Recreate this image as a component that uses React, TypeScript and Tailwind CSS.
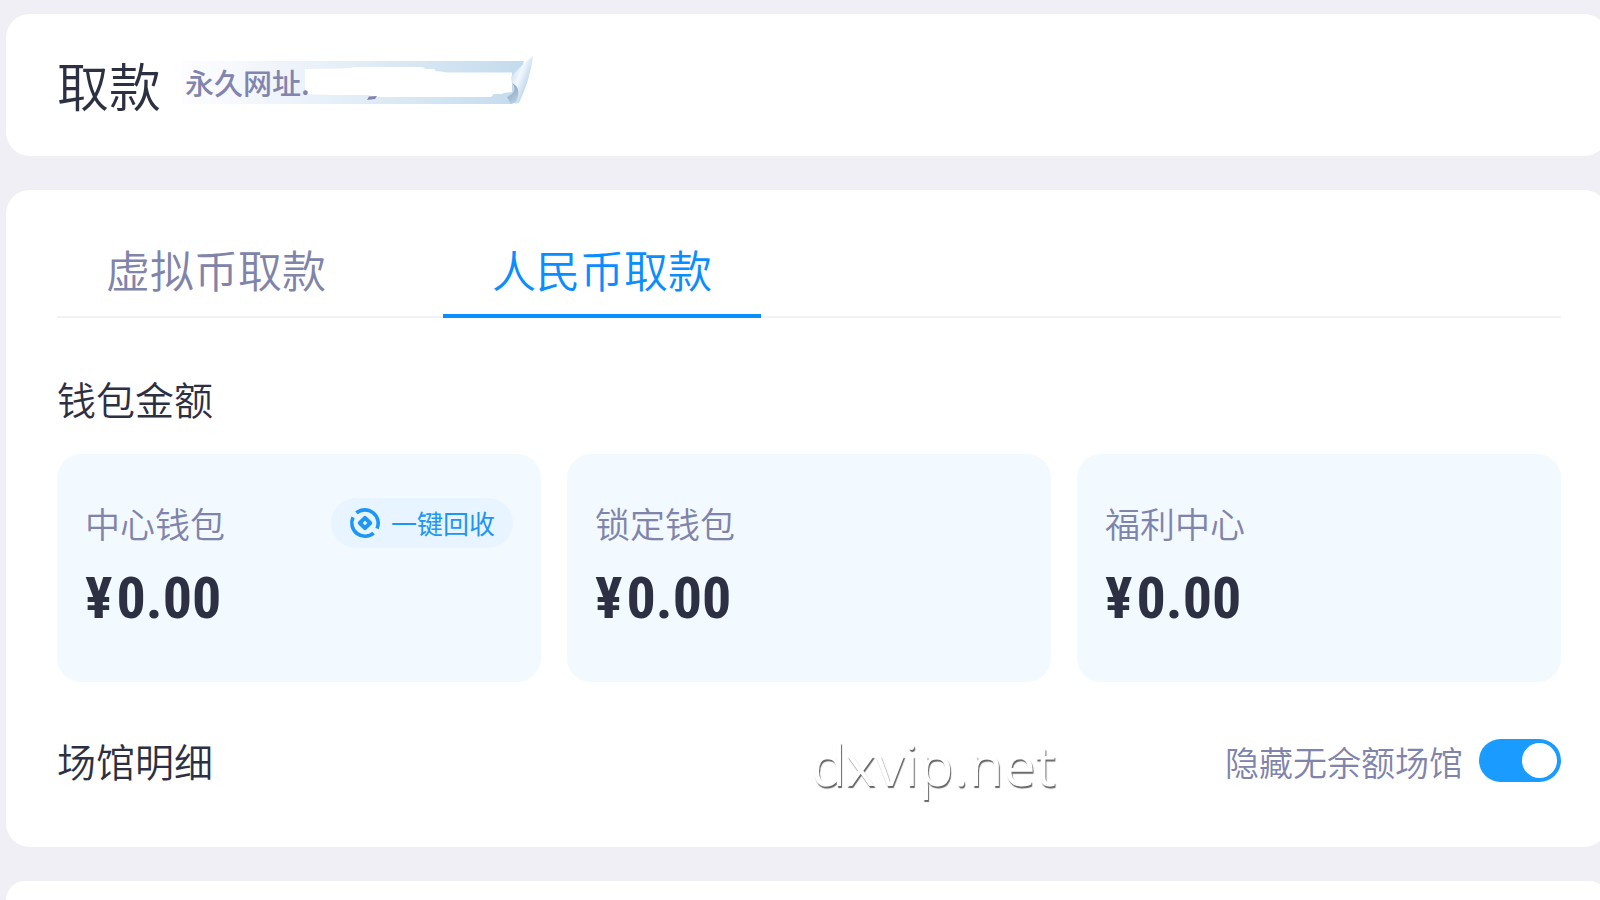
import React, { useState } from 'react';

const tabs = ['虚拟币取款', '人民币取款'];

const wallets = [
  { name: '中心钱包', amount: '0.00', recyclable: true },
  { name: '锁定钱包', amount: '0.00', recyclable: false },
  { name: '福利中心', amount: '0.00', recyclable: false },
];

const RecycleIcon: React.FC = () => (
  <svg viewBox="0 0 32 32" className="h-8 w-8" fill="none" stroke="currentColor" aria-hidden="true">
    <path d="M7.4 5.9A13.3 13.3 0 0 1 28 21.6" strokeWidth="3.6" />
    <path d="M24.6 26.1A13.3 13.3 0 0 1 4 10.3" strokeWidth="3.6" />
    <path d="M16 10.8L21.2 16L16 21.2L10.8 16Z" strokeWidth="4" strokeLinejoin="round" />
  </svg>
);

const UrlBanner: React.FC = () => (
  <div className="relative mt-[42px] h-[50px] w-[352px] self-start">
    <svg viewBox="0 0 352 50" className="absolute inset-0 h-full w-full" aria-hidden="true">
      <defs>
        <linearGradient id="strip" x1="0" x2="1" y1="0" y2="0">
          <stop offset="0" stopColor="#fdfdff" />
          <stop offset="0.4" stopColor="#e9f1f9" />
          <stop offset="1" stopColor="#c3dbed" />
        </linearGradient>
        <linearGradient id="curl" x1="328" x2="346" y1="18" y2="25" gradientUnits="userSpaceOnUse">
          <stop offset="0" stopColor="#c9deee" />
          <stop offset="0.5" stopColor="#f1f8fd" />
          <stop offset="1" stopColor="#c3daeb" />
        </linearGradient>
        <linearGradient id="fold" x1="0" x2="0.6" y1="0" y2="1">
          <stop offset="0" stopColor="#7d97b0" />
          <stop offset="1" stopColor="#bcd4e6" />
        </linearGradient>
      </defs>
      <path d="M0 5H342L330 48H0Z" fill="url(#strip)" />
      <path
        d="M123 13L160 12.5L176 11H240L244 13H252L254 15L266 16.5H330V36L322 37L320 38H312L309 41H192L186 39H150L123 38Z"
        fill="#fff"
      />
      <path d="M187 40.5L195 40L193 43L185 44Z" fill="#8384ad" />
      <path d="M330 27C334 31 334 37 325 41L329 48L336 46L341 30Z" fill="url(#fold)" />
      <path d="M329 21Q338 10 351 0Q348 24 337 47L333 48C338 38 338 31 330 27Z" fill="url(#curl)" />
    </svg>
    <span className="relative block px-[3px] pt-1.5 text-[29px] leading-10 font-medium text-[#8384ad]">永久网址.</span>
  </div>
);

const App: React.FC = () => {
  const [active, setActive] = useState(1);
  const [hideEmpty, setHideEmpty] = useState(true);

  return (
    <div className="flex min-h-screen flex-col overflow-hidden bg-[#f0eff5] pt-3.5 pl-1.5 font-['Noto_Sans_CJK_SC',sans-serif] text-[#2d3042]">
      <div className="-mr-2 flex flex-1 flex-col gap-[34px]">
        <header className="flex h-[142px] items-center gap-[21px] rounded-3xl bg-white px-[51px]">
          <h1 className="text-[52px] leading-[72px] font-[350]">取款</h1>
          <UrlBanner />
        </header>

        <main className="relative rounded-3xl bg-white pt-11 pr-[47px] pb-[59px] pl-[51px]">
          <div role="tablist" className="flex gap-[68px] border-b-2 border-[#f1f2f7]">
            {tabs.map((tab, index) => (
              <button
                key={tab}
                type="button"
                role="tab"
                aria-selected={active === index}
                onClick={() => setActive(index)}
                className={`-mb-0.5 border-b-4 px-[49px] pt-1 pb-3.5 text-[44px] leading-[62px] font-[350] ${
                  active === index ? 'border-[#0a8dff] text-[#0a8dff]' : 'border-transparent text-[#8083aa]'
                }`}
              >
                {tab}
              </button>
            ))}
          </div>

          <h2 className="mt-[52px] text-[39px] leading-[56px] font-[350]">钱包金额</h2>

          <div className="mt-7 grid grid-cols-3 gap-[26px]">
            {wallets.map((wallet) => (
              <section key={wallet.name} className="h-[228px] rounded-3xl bg-[#f2f9ff] px-7 pt-11">
                <div className="flex h-[50px] items-center justify-between">
                  <h3 className="text-[35px] leading-[50px] font-[350] text-[#8083aa]">{wallet.name}</h3>
                  {wallet.recyclable && (
                    <button
                      type="button"
                      className="flex h-[50px] items-center gap-2.5 rounded-full bg-[#e8f4ff] px-[18px] text-[26px] leading-[50px] text-[#1e96f5]"
                    >
                      <RecycleIcon />
                      一键回收
                    </button>
                  )}
                </div>
                <p className="mt-3.5 font-['Roboto_Condensed',Roboto,sans-serif] text-[58px] leading-[72px] font-bold">
                  <span className="mr-1">¥</span>
                  {wallet.amount}
                </p>
              </section>
            ))}
          </div>

          <div className="mt-[50px] flex items-center justify-between">
            <h2 className="text-[39px] leading-[56px] font-[350]">场馆明细</h2>
            <div className="flex items-center gap-4">
              <label htmlFor="hide-empty" className="pt-1 text-[34px] leading-[52px] font-[350] text-[#8083aa]">
                隐藏无余额场馆
              </label>
              <input
                id="hide-empty"
                type="checkbox"
                role="switch"
                checked={hideEmpty}
                onChange={(e) => setHideEmpty(e.target.checked)}
                className="h-[43px] w-[82px] appearance-none rounded-full bg-[#c8cbd8] p-1 before:block before:size-[35px] before:rounded-full before:bg-white checked:bg-[#1a9bff] checked:before:ml-auto"
              />
            </div>
          </div>

          <span className="pointer-events-none absolute bottom-11 left-1/2 pl-1 font-['Open_Sans',sans-serif] text-[57px] leading-[78px] text-white [text-shadow:1px_2px_1px_#666]">
            dxvip.net
          </span>
        </main>

        <section className="min-h-4 flex-1 rounded-t-3xl bg-white" />
      </div>
    </div>
  );
};

export default App;
